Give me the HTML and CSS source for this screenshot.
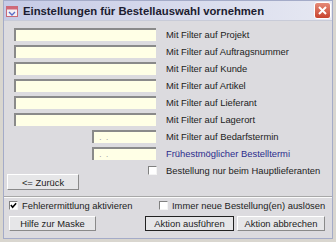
FILE: index.html
```html
<!DOCTYPE html>
<html lang="de">
<head>
    <meta charset="UTF-8">
    <title>Einstellungen für Bestellauswahl vornehmen</title>
    <link rel="stylesheet" href="styles.css">
</head>
<body>
    <div class="window">
        <div class="titlebar">
            <svg class="app-icon" width="12" height="12" viewBox="0 0 12 12">
                <rect x="0.5" y="1.5" width="11" height="10" fill="#f4f0f4" stroke="#c86a78"/>
                <rect x="0.5" y="1.5" width="11" height="3" fill="#d06878"/>
                <path d="M3 7 L6 10 L9 7" fill="none" stroke="#5a6cc8" stroke-width="1.4"/>
            </svg>
            <span class="title">Einstellungen für Bestellauswahl vornehmen</span>
            <span class="close">
                <svg width="15" height="15" viewBox="0 0 15 15">
                    <path d="M4 4 L11 11 M11 4 L4 11" stroke="#fff" stroke-width="2"/>
                </svg>
            </span>
        </div>

        <div class="content">
            <div class="filters">
                <input class="field" type="text"><span class="caption">Mit Filter auf Projekt</span>
                <input class="field" type="text"><span class="caption">Mit Filter auf Auftragsnummer</span>
                <input class="field" type="text"><span class="caption">Mit Filter auf Kunde</span>
                <input class="field" type="text"><span class="caption">Mit Filter auf Artikel</span>
                <input class="field" type="text"><span class="caption">Mit Filter auf Lieferant</span>
                <input class="field" type="text"><span class="caption">Mit Filter auf Lagerort</span>
                <input class="field date" type="text" value=" .  ."><span class="caption">Mit Filter auf Bedarfstermin</span>
                <input class="field date" type="text" value=" .  ."><span class="caption blue">Frühestmöglicher Bestelltermi</span>
                <span class="box right"></span><span class="caption">Bestellung nur beim Hauptlieferanten</span>
            </div>

            <div class="back-row">
                <button class="btn back">&lt;= Zurück</button>
            </div>

            <div class="separator"></div>

            <div class="options">
                <label class="option"><span class="box checked">
                    <svg width="7" height="7" viewBox="0 0 8 8"><path d="M1 3.5 L3 6 L7 1.5" fill="none" stroke="#000" stroke-width="1.8"/></svg>
                </span>Fehlerermittlung aktivieren</label>
                <label class="option"><span class="box"></span>Immer neue Bestellung(en) auslösen</label>
            </div>

            <div class="actions">
                <button class="btn help">Hilfe zur Maske</button>
                <button class="btn run">Aktion ausführen</button>
                <button class="btn cancel">Aktion abbrechen</button>
            </div>
        </div>
    </div>
</body>
</html>
```

FILE: styles.css
```css
body {
    margin: 0;
    padding: 0;
    width: 336px;
    height: 242px;
    background-color: #d9d6cf;
    font-family: "Liberation Sans", Arial, sans-serif;
    font-size: 9.4px;
    color: #222;
    overflow: hidden;
}

.window {
    margin-left: 3px;
    width: 328px;
    height: 237px;
    border: 1px solid #a4abc8;
    background-color: #dcdbdf;
    display: flex;
    flex-direction: column;
}

.titlebar {
    height: 19px;
    display: flex;
    align-items: center;
    padding-left: 2px;
    background: linear-gradient(to right, #c6cbe6, #e6e8f2);
    border-bottom: 1px solid #c8cbd8;
}

.app-icon {
    margin-right: 5px;
}

.title {
    font-weight: bold;
    font-size: 11.3px;
    color: #1c1c30;
    flex: 1;
}

.close {
    width: 15px;
    height: 15px;
    margin-right: 1px;
    border-radius: 3px;
    background: linear-gradient(#e58a78, #c8432e);
    border: 1px solid #fff;
    display: flex;
}

.content {
    padding: 5px 0 0 10px;
}

.filters {
    display: grid;
    grid-template-columns: 142px 1fr;
    grid-auto-rows: 17px;
    column-gap: 10px;
    align-items: center;
}

.field {
    height: 13px;
    width: 142px;
    box-sizing: border-box;
    margin: 0;
    padding: 0 3px;
    border: none;
    border-top: 2px solid #8a8a8a;
    border-left: 2px solid #8a8a8a;
    background-color: #ffffe6;
    font-family: inherit;
    font-size: 8px;
    color: #888;
}

.field.date {
    width: 64px;
    justify-self: end;
}

.caption {
    white-space: nowrap;
}

.caption.blue {
    color: #2b2b8c;
}

.box {
    width: 9px;
    height: 9px;
    flex: none;
    box-sizing: border-box;
    background-color: #fff;
    border-top: 1px solid #808080;
    border-left: 1px solid #808080;
    border-right: 1px solid #f4f4f4;
    border-bottom: 1px solid #f4f4f4;
    display: inline-flex;
    align-items: center;
    justify-content: center;
}

.box.right {
    justify-self: end;
    margin-right: -1px;
}

.back-row {
    margin-top: -5px;
    margin-left: -7px;
}

.btn {
    height: 15px;
    padding: 0;
    font-family: inherit;
    font-size: 9.4px;
    color: #222;
    background-color: #e6e6e8;
    border-top: 1px solid #fff;
    border-left: 1px solid #fff;
    border-right: 1px solid #8a8a8a;
    border-bottom: 1px solid #8a8a8a;
}

.back {
    width: 72px;
    height: 16px;
}

.separator {
    margin: 6px 0 0 -10px;
    border-top: 1px solid #a8a8a8;
    border-bottom: 1px solid #fafafa;
}

.options {
    display: grid;
    grid-template-columns: 150px 1fr;
    height: 14px;
    align-items: center;
    margin-left: -5px;
}

.option {
    display: flex;
    align-items: center;
    gap: 4px;
    white-space: nowrap;
}

.actions {
    display: flex;
    margin-top: 4px;
    margin-left: -5px;
}

.help {
    width: 87px;
}

.run {
    width: 89px;
    margin-left: 49px;
    border: 1px solid #222;
}

.cancel {
    width: 88px;
    margin-left: 3px;
}
```
